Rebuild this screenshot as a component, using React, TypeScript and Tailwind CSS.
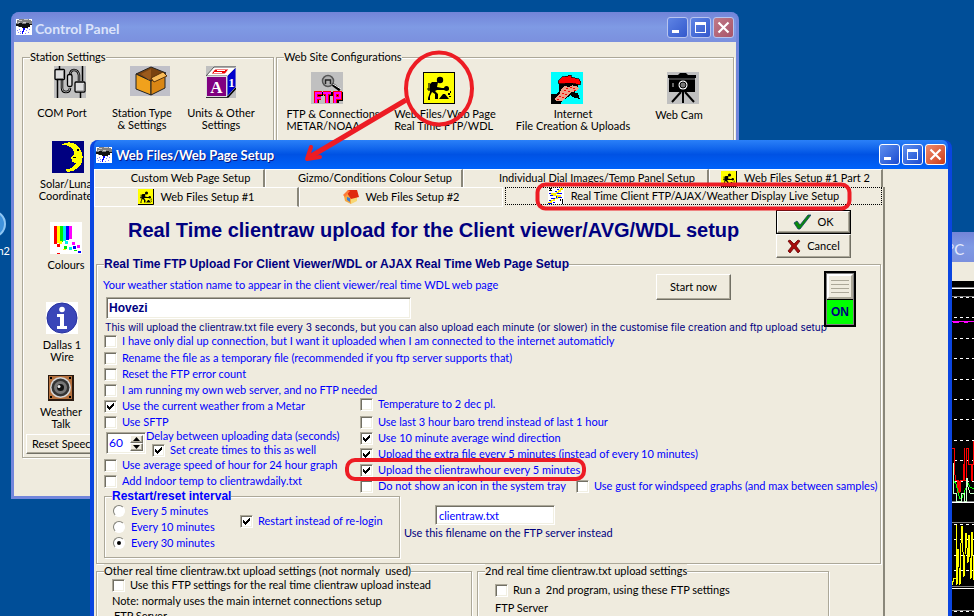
import type { ReactNode } from "react";

/* ---------- icons ---------- */

function StormIcon() {
  return (
    <svg viewBox="0 0 16 16" className="size-4 shrink-0" shapeRendering="crispEdges" aria-hidden="true">
      <rect width="16" height="16" fill="#fff" />
      <path d="M3 0h10v1h2v1h1v4h-2v2h-4v1H6V8H2V6H0V4h1V1h2z" fill="#808080" />
      <path d="M3 1h3v1H3zM8 0h4v1H8zM7 3h3v1H7zM2 3h2v1H2z" fill="#c8c8c8" />
      <path d="M0 5h3V4h3v1h4V4h3v1h3v1h-2v2h-2v1H6V8H3V7H0z" fill="#111" />
      <path d="M7 9h2v2H8v2H7v2H6v-3h1z" fill="#00f" />
      <path d="M3 10h1v1H3zM4 12h1v1H4zM2 13h1v1H2zM1 11h1v1H1zM10 11h1v1h-1zM12 13h1v1h-1zM9 14h1v1H9zM13 10h1v1h-1zM11 9h1v1h-1zM4 14h1v1H4z" fill="#7f7fff" />
    </svg>
  );
}

function DiggerIcon({ small = false }: { small?: boolean }) {
  return (
    <svg viewBox="0 0 32 32" className={small ? "size-4 shrink-0" : "size-8 shrink-0"} aria-hidden="true">
      <rect width="32" height="32" fill={small ? "#ff0" : "#000"} />
      <rect x="1" y="1" width="30" height="30" fill="#ff0" />
      {small && <path d="M31 0v31H0" fill="none" stroke="#000" strokeWidth="2" />}
      <circle cx="17" cy="8" r="3.2" />
      <path d="M9 10h6l-1 5 5 1h3l1 2h-9l-2 1 3 3v5h-3v-5l-3-2-2 4v4H5v-2l2-6V12z" />
      <path d="M6 11v8M4 17h22" fill="none" stroke="#000" strokeWidth="1.2" />
      <circle cx="23.500" cy="16.500" r="2.500" />
      <path d="M16 27l4-5h2l4 5zM25 21h2v2h-2zM27 19h1v2h-1zM26 24h2v1h-2z" />
    </svg>
  );
}

function ComPortIcon() {
  return (
    <svg viewBox="0 0 32 32" className="size-8" aria-hidden="true">
      <rect width="32" height="32" fill="#c0c0c0" />
      <path d="M5.500 0v3M3.500 14v18M28.500 0v15M26.500 26v6" stroke="#000" strokeWidth="1.500" />
      <path d="M8 14v8q0 4 4 4t4-4M16 10q0-6 4-6t5 5v6" fill="none" stroke="#000" strokeWidth="2.500" />
      <path d="M8 14v8q0 4 4 4t4-4M16 10q0-6 4-6t5 5v6" fill="none" stroke="#bbb" strokeWidth=".8" />
      <rect x="1" y="3.500" width="9.500" height="10" rx="1" fill="#ddd" stroke="#000" strokeWidth="1.300" />
      <rect x="21" y="16" width="10" height="10" rx="1" fill="#ddd" stroke="#000" strokeWidth="1.300" />
      <path d="M2.500 12.500h7V5M22.500 25h7.500v-7" fill="none" stroke="#808080" />
      <rect x="13.500" y="8.500" width="4.500" height="12" rx="1.500" fill="#ddd" stroke="#000" strokeWidth="1.300" />
    </svg>
  );
}

function BoxIcon() {
  return (
    <svg viewBox="0 0 40 30" className="h-[30px] w-10" aria-hidden="true">
      <rect width="40" height="30" fill="#c0c0c8" />
      <path d="M6 8L21 1l15 6-15 8z" fill="#7a4310" stroke="#222" />
      <path d="M6 8l15 7v14L6 23z" fill="#f0a11c" stroke="#222" />
      <path d="M21 15l14-6v13l-14 7z" fill="#d98614" stroke="#222" />
      <path d="M21 12l12-6 4 4-13 6z" fill="#f8bb58" stroke="#5a3208" />
      <path d="M11 8l10-5v9l-2 2z" fill="#9b5a1c" />
    </svg>
  );
}

function BlockIcon() {
  return (
    <svg viewBox="0 0 30 32" className="h-8 w-[30px]" aria-hidden="true">
      <rect width="30" height="32" fill="#c0c0c0" />
      <path d="M0 10L8 1h22l-9 9z" fill="#fff" stroke="#555" />
      <path d="M21 10l9-9v20l-9 10z" fill="#00c" stroke="#ccc" />
      <path d="M0 31h22l8-9" fill="none" stroke="#000" strokeWidth="1.500" />
      <rect x="0.500" y="10.500" width="20" height="20" fill="#800080" stroke="#ddd" />
      <path d="M9 3h14l-4 5H5zM11 4.500h8M8 6.500h8" fill="#e00" stroke="#fff" strokeWidth="1" />
      <text x="10.500" y="27" textAnchor="middle" fill="#fff" fontSize="17" fontWeight="700" fontFamily="Liberation Serif, serif">A</text>
      <text x="25.500" y="21" textAnchor="middle" fill="#fff" fontSize="13" fontWeight="700" fontFamily="Liberation Serif, serif">1</text>
    </svg>
  );
}

function MoonIcon() {
  return (
    <svg viewBox="0 0 32 32" className="size-8" shapeRendering="crispEdges" aria-hidden="true">
      <rect width="32" height="32" fill="#000080" />
      <path d="M9 4C16-1 27 1 30 12c3 11-5 19-15 19l-1-3c5 0 8-2 10-6l-4-1v-2h1l-3-2 4-4C22 8 18 3 9 4z" fill="#ff0" />
      <path d="M25 8h2v2h-2zM21 16h3v1h-3z" fill="#000" />
    </svg>
  );
}

function ColoursIcon() {
  const bars = ["#f00", "#ff0", "#0e0", "#0ee", "#00f", "#f0f"];
  return (
    <svg viewBox="0 0 32 32" className="size-8" shapeRendering="crispEdges" aria-hidden="true">
      <rect width="32" height="32" fill="#fff" />
      {bars.map((c, i) => (
        <rect key={c} x={4 + i * 3} y="4" width="3" height={18 - i} fill={c} />
      ))}
      <path d="M7 22h3v3H7zM7 31h3v1H7z" fill="#f00" />
      <path d="M9 19h3v3H9zM13 27h3v1h-3z" fill="#ff0" />
      <path d="M14 24h3v3h-3zM24 28h3v1h-3z" fill="#0e0" />
      <path d="M15 19h3v3h-3zM19 25h3v3h-3z" fill="#0ee" />
      <path d="M23 24h3v3h-3zM28 29h3v2h-3z" fill="#00f" />
      <path d="M22 20h3v3h-3zM27 23h3v3h-3z" fill="#f0f" />
    </svg>
  );
}

function InfoIcon() {
  return (
    <svg viewBox="0 0 32 32" className="size-8" aria-hidden="true">
      <rect width="32" height="32" fill="#fff" />
      <circle cx="16" cy="16" r="15" fill="#3a46b8" stroke="#2630a0" />
      <circle cx="16" cy="7.500" r="2.800" fill="#fff" />
      <path d="M11 12h7v12h3v3H11v-3h3v-9h-3z" fill="#fff" />
    </svg>
  );
}

function SpeakerIcon() {
  return (
    <svg viewBox="0 0 26 26" className="size-[26px]" aria-hidden="true">
      <rect width="26" height="26" fill="#2a1a10" />
      <rect x="1" y="1" width="23" height="23" fill="#b5703c" />
      <circle cx="12.500" cy="12.500" r="10.500" fill="#d5d5d5" />
      <circle cx="12.500" cy="12.500" r="9" fill="#333" />
      <circle cx="12.500" cy="12.500" r="6.500" fill="#777" />
      <circle cx="12.500" cy="12.500" r="3.500" fill="#111" />
      <circle cx="11" cy="11.500" r="1.500" fill="#eee" />
      <path d="M2 2h2v2H2zM21 2h2v2h-2zM2 21h2v2H2zM21 21h2v2h-2z" fill="#000" />
    </svg>
  );
}

function FtpIcon() {
  return (
    <svg viewBox="0 0 32 32" className="size-8" aria-hidden="true">
      <rect width="32" height="32" fill="#c0c0c0" />
      <path d="M21 12l8 6" stroke="#000" strokeWidth="3" />
      <path d="M22 12l8 5" stroke="#fff" strokeWidth="1" />
      <circle cx="17" cy="9" r="5.500" fill="#b0b0b0" stroke="#555" strokeWidth="1.500" />
      <path d="M14.500 12V8h5v4" fill="none" stroke="#222" strokeWidth="1.500" />
      <g fill="none" shapeRendering="crispEdges">
        <path d="M6 31V22h6M6 26h4M17 31V22M13 22h9M26 31V22h5v5h-5" stroke="#000" strokeWidth="4" />
        <path d="M5 31V21h6M5 26h5M16 31V21M12 21h8M24 31V21h5v5h-5" stroke="#f00" strokeWidth="4" />
        <path d="M5 31V21h6M5 26h5M16 31V21M12 21h8M24 31V21h5v5h-5" stroke="#f0f" strokeWidth="2" />
      </g>
    </svg>
  );
}

function InternetIcon() {
  return (
    <svg viewBox="0 0 32 32" className="size-8" shapeRendering="crispEdges" aria-hidden="true">
      <rect width="32" height="32" fill="#0ff" />
      <path d="M8 9h20l-1 6-4 6-12 8-1 3H0V22h6l2-3z" fill="#000" />
      <path d="M13 14l5 1 4-2 4 1 2 3-3 2-4 1-4 3-6 6-6 0-1-3 5-5 1-4z" fill="#eda188" />
      <path d="M15 16h2v1h-2zM19 15h2v1h-2zM22 16h2v1h-2zM13 18h2v1h-2zM17 19h2v1h-2zM11 21h2v1h-2zM14 22h2v1h-2zM8 24h2v1H8zM11 25h2v1h-2zM23 18h2v1h-2zM6 27h2v1H6z" fill="#f00" />
      <path d="M20 20l7 1 2 6-5-1-5-3zM22 13h5v1h-5z" fill="#000" />
      <path d="M7 9l4-4 6-1V3h3v2l8 2 2 3-1 3-9-2-12 1z" fill="#f00" stroke="#000" strokeWidth=".7" />
    </svg>
  );
}

function CameraIcon() {
  return (
    <svg viewBox="0 0 32 32" className="size-8" aria-hidden="true">
      <rect width="32" height="32" fill="#c0c0c0" />
      <path d="M1 3h10l2-2h6l2 2h8v3h-1v14H2V6H1z" fill="#000" />
      <path d="M2 7h26" stroke="#777" />
      <circle cx="16" cy="13" r="4.500" fill="#fff" />
      <circle cx="16" cy="13" r="3" fill="#777" stroke="#000" />
      <rect x="5" y="11" width="2" height="4" fill="#666" />
      <path d="M14 20L5 30M16 20v11M18 20l9 10" stroke="#000" strokeWidth="2" />
    </svg>
  );
}

function HouseIcon() {
  return (
    <svg viewBox="0 0 16 16" className="size-4 shrink-0" aria-hidden="true">
      <path d="M1 7l4-4 4 5-1 7-6-3z" fill="#f4a640" />
      <path d="M8 8l6-1v5l-6 3z" fill="#f7d774" />
      <path d="M5 1l9 0 2 7-8 2-4-6z" fill="#e02a10" />
      <path d="M0 6l5-5 2 1-5 6z" fill="#ff7b39" />
      <path d="M4 8l3 1v4l-3-2z" fill="#3f7fd0" />
    </svg>
  );
}

function LightningIcon() {
  return (
    <svg viewBox="0 0 16 16" className="size-4 shrink-0" shapeRendering="crispEdges" aria-hidden="true">
      <rect width="16" height="16" fill="#fff" />
      <path d="M12 0h3v2h-2v2h-2v2H8V4h2V2h2zM3 5h5v2h5v2h-3v2H7v2H4v2H0v-1h2v-2h3v-2h3V8H5V7H3z" fill="#fe0" />
      <path d="M9 1h2v1H9zM7 3h2v1H7zM1 5h2v1H1zM2 7h3v1H2zM9 5h5v1H9zM3 10h4v1H3zM10 9h4v1h-4zM1 12h2v1H1zM0 15h4v1H0zM5 14h2v1H5zM8 8h1v2H8z" fill="#00f" />
      <path d="M1 0h3v1H1zM2 1h1v1H2zM1 2h3v1H1zM14 11h1v5h-1zM12 11h1v2h-1z" fill="#000" />
    </svg>
  );
}

/* ---------- shared controls ---------- */

const face = "bg-[#efebde]";
const raised =
  "bg-[#efebde] border border-t-white border-l-white border-b-[#716f64] border-r-[#716f64] shadow-[inset_-1px_-1px_0_#aca899]";
const sunken =
  "bg-white border border-t-[#aca899] border-l-[#aca899] border-b-white border-r-white shadow-[inset_1px_1px_0_#716f64,inset_-1px_-1px_0_#f1efe2]";
const boldText = "font-['Liberation_Sans',Arial,sans-serif] text-[12px] font-bold";

function Check({ label, checked = false, color = "text-[#00f]" }: { label: string; checked?: boolean; color?: string }) {
  return (
    <label className={`flex h-4 items-center gap-[5px] whitespace-pre ${color}`}>
      <span className="grid size-[13px] shrink-0 place-items-center">
        <input type="checkbox" defaultChecked={checked} className={`peer col-start-1 row-start-1 size-[13px] appearance-none ${sunken}`} />
        <svg viewBox="0 0 7 7" className="pointer-events-none invisible col-start-1 row-start-1 size-[7px] peer-checked:visible" shapeRendering="crispEdges" aria-hidden="true">
          <path d="M0 2h1v1h1v1h1V3h1V2h1V1h1V0h1v3H6v1H5v1H4v1H3v1H2V6H1V5H0z" fill="#000" />
        </svg>
      </span>
      {label}
    </label>
  );
}

function Radio({ label, checked = false }: { label: string; checked?: boolean }) {
  return (
    <label className="flex h-4 items-center gap-[6px] whitespace-nowrap text-[#00f]">
      <span className="grid size-3 shrink-0 place-items-center">
        <input
          type="radio"
          name="interval"
          defaultChecked={checked}
          className="peer col-start-1 row-start-1 size-3 appearance-none rounded-full border border-t-[#808078] border-l-[#808078] border-b-white border-r-white bg-white"
        />
        <span className="pointer-events-none invisible col-start-1 row-start-1 size-1 rounded-full bg-black peer-checked:visible" />
      </span>
      {label}
    </label>
  );
}

function Group({ title, className, legendClass = "", children }: { title: string; className: string; legendClass?: string; children: ReactNode }) {
  return (
    <fieldset className={`min-w-0 border border-[#aca899] shadow-[1px_1px_0_#fff,inset_1px_1px_0_#fff] ${className}`}>
      <legend className={`ml-[7px] bg-[#efebde] leading-[14px] whitespace-nowrap ${legendClass}`}>{title}</legend>
      {children}
    </fieldset>
  );
}

function CaptionButtons({ active = false }: { active?: boolean }) {
  const blue = active
    ? "border-white bg-linear-to-br from-[#5f8fee] to-[#1c49d0]"
    : "border-[#b8c4ee] bg-linear-to-br from-[#5f84e4] to-[#3458cc]";
  const red = active
    ? "border-white bg-linear-to-br from-[#ef8a6c] to-[#cc3a10]"
    : "border-[#b8c4ee] bg-linear-to-br from-[#c07a88] to-[#a8546a]";
  const base = "grid size-[21px] place-items-center rounded-[3px] border";
  return (
    <div className="ml-auto flex gap-0.5">
      <button aria-label="Minimize" className={`${base} ${blue}`}>
        <svg viewBox="0 0 13 13" className="size-[13px]"><path d="M1 9h7v3H1z" fill="#fff" /></svg>
      </button>
      <button aria-label="Maximize" className={`${base} ${blue}`}>
        <svg viewBox="0 0 13 13" className="size-[13px]" shapeRendering="crispEdges"><path d="M1 1h11v11H1zM2 4v7h9V4z" fill="#fff" fillRule="evenodd" /></svg>
      </button>
      <button aria-label="Close" className={`${base} ${red}`}>
        <svg viewBox="0 0 13 13" className="size-[13px]"><path d="M1.500 1.500l10 10M11.500 1.500l-10 10" stroke="#fff" strokeWidth="2.200" /></svg>
      </button>
    </div>
  );
}

function Launcher({
  icon,
  lines,
  className,
  iconClass = "",
  gap = "gap-[5px]",
  align = "text-center",
}: {
  icon: ReactNode;
  lines: string[];
  className: string;
  iconClass?: string;
  gap?: string;
  align?: string;
}) {
  return (
    <div className={`flex shrink-0 flex-col items-center ${gap} ${className}`}>
      <span className={iconClass}>{icon}</span>
      <span className={`leading-3 whitespace-nowrap ${align}`}>
        {lines.map((l) => (
          <span key={l} className="block">{l}</span>
        ))}
      </span>
    </div>
  );
}

/* ---------- windows ---------- */

function ControlPanel() {
  return (
    <section className="absolute top-3 left-[11px] flex h-[487px] w-[728px] flex-col rounded-t-lg border-[3px] border-t-0 border-[#7286dc] bg-[#7286dc]">
      <header className="flex h-[30px] shrink-0 items-center rounded-t-md bg-linear-to-b from-[#7284d8] via-[#7f9ae4] to-[#7b90de] pr-0.5 pl-0.5">
        <StormIcon />
        <h2 className="ml-[3px] pt-0.5 text-[14px] font-bold text-[#dbe3fa]">Control Panel</h2>
        <CaptionButtons />
      </header>
      <div className={`flex flex-1 items-start gap-[2px] px-2 pt-2 ${face}`}>
        <Group title="Station Settings" className="h-[408px] w-[252px] shrink-0">
          <div className="flex h-[77px] pt-0.5 pl-[15px]">
            <Launcher icon={<ComPortIcon />} lines={["COM Port"]} className="w-12" iconClass="self-end" gap="gap-[9px]" />
            <Launcher icon={<BoxIcon />} lines={["Station Type", "& Settings"]} className="ml-[22px] w-[68px]" iconClass="pl-4" gap="gap-[11px]" />
            <Launcher icon={<BlockIcon />} lines={["Units & Other", "Settings"]} className="ml-[11px] w-[68px]" gap="gap-[9px]" />
          </div>
          <Launcher icon={<MoonIcon />} lines={["Solar/Lunar", "Coordinates"]} className="ml-[3px] h-[81px] w-[84px]" />
          <Launcher icon={<ColoursIcon />} lines={["Colours"]} className="ml-[3px] h-20 w-20" />
          <Launcher icon={<InfoIcon />} lines={["Dallas 1", "Wire"]} className="ml-[3px] h-[73px] w-[72px]" />
          <Launcher icon={<SpeakerIcon />} lines={["Weather", "Talk"]} className="ml-[3px] h-[59px] w-[70px]" />
          <button className={`ml-[3px] h-5 w-[110px] pl-[5px] text-left whitespace-nowrap ${raised}`}>Reset Speech</button>
        </Group>
        <Group title="Web Site Configurations" className="h-[408px] w-[458px] shrink-0">
          <div className="flex pt-2 pl-[10px]">
            <Launcher icon={<FtpIcon />} lines={["FTP & Connections", "METAR/NOAA"]} className="w-[92px]" iconClass="pr-3" gap="gap-1" align="text-left" />
            <Launcher icon={<DiggerIcon />} lines={["Web Files/Web Page", "Real Time FTP/WDL"]} className="ml-[14px] w-[104px]" iconClass="pr-3" gap="gap-1" align="text-left" />
            <Launcher icon={<InternetIcon />} lines={["Internet", "File Creation & Uploads"]} className="ml-[21px] w-[110px]" iconClass="pr-3" gap="gap-1" />
            <Launcher icon={<CameraIcon />} lines={["Web Cam"]} className="ml-[27px] w-12" iconClass="pl-2" />
          </div>
        </Group>
      </div>
    </section>
  );
}

function GraphWindow() {
  const dashes = [297, 317, 338, 358, 379, 399, 419, 440, 460, 481, 524, 539, 555, 570, 611];
  return (
    <section className="absolute top-[232px] right-0 bottom-0 left-[940px] flex flex-col bg-black">
      <header className="flex h-[30px] shrink-0 items-center bg-linear-to-b from-[#7284d8] via-[#7f9ae4] to-[#7b90de] pt-1 pl-2">
        <h2 className="text-[15px] text-[#e4eafc]">°C</h2>
      </header>
      <div className={`h-[19px] shrink-0 ${face}`} />
      <div className="flex-1 overflow-hidden">
        <svg viewBox="940 281 34 335" className="h-[335px] w-[34px]" shapeRendering="crispEdges" fill="none" role="img" aria-label="Weather graph">
          <path d="M940 287.500h34M940 296.500h34M940 501.500h34M940 522.500h34M940 586.500h34M940 610.500h34" stroke="#808080" />
          <path d="M940 288.500h34M940 502.500h34M940 588.500h34" stroke="#fff" />
          {dashes.map((y) => (
            <path key={y} d={`M954 ${y + 0.5}h20`} stroke="#fff" strokeDasharray="3 3" />
          ))}
          <path d="M952 321.500h22M953 322.500h6M964 322.500h4" stroke="#f0f" />
          <path d="M952 448.500h2.500v24l1.500 8h1v10l1 2 1-12 1 12 1-12h2v-16h1v-16h.500v32h2v-32h1.500v16h3.500v16h1v-16h1v-24" stroke="#f00" />
          <path d="M954 481l2 3 2 8 2 7 2-1 1-3 3-7 2-5 2 4 4 2" stroke="#0f0" />
          <path d="M953 463v30h3v8h5v-8h3v8h2v-8l1-15 1 9 2 6h4" stroke="#cfc" />
          <path d="M952 585l2-7h2v-53l1 60 1-36 2 36 1-42 1-17 2 51 2-44 2 30 1-28 2 44 1-47 2 48" stroke="#ff0" />
        </svg>
      </div>
    </section>
  );
}

function Tab({ label, icon, className }: { label: string; icon?: ReactNode; className: string }) {
  return (
    <button role="tab" className={`flex shrink-0 items-center justify-center gap-[7px] whitespace-nowrap ${className}`}>
      <span className="size-4 shrink-0">{icon}</span>
      {label}
    </button>
  );
}

const tabEdge = "border-t border-l border-white border-r-2 border-r-[#8a877a]";

function UploadGroup() {
  return (
    <Group
      title="Real Time FTP Upload For Client Viewer/WDL or AJAX Real Time Web Page Setup"
      className="-mt-px ml-0.5 w-[785px] pb-[5px]"
      legendClass={`text-[#000080] ${boldText}`}
    >
      <div className="flex items-start pl-[6px]">
        <div className="w-[721px] shrink-0">
          <div className="flex items-start justify-between pr-[93px]">
            <div className="pt-[7px]">
              <label htmlFor="station" className="block leading-[14px] whitespace-nowrap text-[#00f]">Your weather station name to appear in the client viewer/real time WDL web page</label>
              <input id="station" defaultValue="Hovezi" className={`mt-[5px] ml-[3px] block h-[22px] w-[305px] px-0.5 text-[#000080] ${boldText} ${sunken}`} />
            </div>
            <button className={`mt-[3px] h-[26px] w-[75px] ${raised}`}>Start now</button>
          </div>
          <p className="mt-0.5 pl-0.5 font-['Inter','Liberation_Sans',sans-serif] text-[10px] leading-3 whitespace-nowrap text-[#000080]">
            This will upload the clientraw.txt file every 3 seconds, but you can also upload each minute (or slower) in the customise file creation and ftp upload setup
          </p>
        </div>
        <button aria-pressed="true" className="flex h-14 w-8 shrink-0 flex-col border-2 border-black bg-[#808080] p-px">
          <span className="flex h-[25px] w-full flex-col justify-center gap-[3px] border-2 border-t-white border-l-white border-r-[#aca899] border-b-[#aca899] bg-[#efebde] px-[2px]">
            <span className="h-px bg-[#aca899]" />
            <span className="h-px bg-[#aca899]" />
            <span className="h-px bg-[#aca899]" />
            <span className="h-px bg-[#aca899]" />
          </span>
          <span className={`grid w-full flex-1 place-items-center border-t border-black bg-[#0f0] text-[#000080] ${boldText}`}>ON</span>
        </button>
      </div>

      <div className="flex pl-[7px]">
        <div className="w-64 shrink-0">
          <Check label="I have only dial up connection, but I want it uploaded when I am connected to the internet automaticly" />
          <div className="mt-px">
            <Check label="Rename the file as a temporary file (recommended if you ftp server supports that)" />
            <Check label="Reset the FTP error count" />
            <Check label="I am running my own web server, and no FTP needed" />
            <Check label="Use the current weather from a Metar" checked />
            <Check label="Use SFTP" />
          </div>
          <div className="flex h-[27px]">
            <div className={`mt-0.5 ml-0.5 flex h-[22px] w-10 shrink-0 p-0.5 ${sunken}`}>
              <input id="delay" defaultValue="60" className="w-[21px] bg-transparent text-[12px] text-[#00f]" />
              <span className="flex w-[15px] flex-col">
                <button aria-label="Increase" className={`grid h-2 place-items-center ${raised}`}>
                  <svg viewBox="0 0 7 4" className="h-1 w-[7px]"><path d="M3.500 0L7 4H0z" /></svg>
                </button>
                <button aria-label="Decrease" className={`grid h-2 place-items-center ${raised}`}>
                  <svg viewBox="0 0 7 4" className="h-1 w-[7px]"><path d="M3.500 4L7 0H0z" /></svg>
                </button>
              </span>
            </div>
            <div>
              <label htmlFor="delay" className="block leading-3 whitespace-nowrap text-[#00f]">Delay between uploading data (seconds)</label>
              <div className="pl-[6px]">
                <Check label="Set create times to this as well" checked />
              </div>
            </div>
          </div>
          <Check label="Use average speed of hour for 24 hour graph" />
          <Check label="Add Indoor temp to clientrawdaily.txt" />
        </div>
        <div className="pt-[63px]">
          <Check label="Temperature to 2 dec pl." />
          <div className="pt-0.5">
            <Check label="Use last 3 hour baro trend instead of last 1 hour" />
            <Check label="Use 10 minute average wind direction" checked />
            <Check label="Upload the extra file every 5 minutes (instead of every 10 minutes)" checked />
            <Check label="Upload the clientrawhour every 5 minutes" checked />
            <div className="flex">
              <div className="w-[216px]">
                <Check label="Do not show an icon in the system tray" />
              </div>
              <Check label="Use gust for windspeed graphs (and max between samples)" />
            </div>
          </div>
        </div>
      </div>

      <div className="-mt-[5px] flex items-start pl-[7px]">
        <Group title="Restart/reset interval" className="w-[296px] shrink-0 pb-[6px]" legendClass={`text-[#00f] ${boldText}`}>
          <div className="flex items-center pl-2">
            <div className="w-[127px]">
              <Radio label="Every 5 minutes" />
              <Radio label="Every 10 minutes" />
              <Radio label="Every 30 minutes" checked />
            </div>
            <div className="pb-3">
              <Check label="Restart instead of re-login" checked />
            </div>
          </div>
        </Group>
        <div className="pt-4 pl-1">
          <input id="filename" defaultValue="clientraw.txt" className={`ml-[31px] block h-5 w-[120px] px-[3px] text-[#00f] ${sunken}`} />
          <label htmlFor="filename" className="block leading-4 whitespace-nowrap text-[#000080]">Use this filename on the FTP server instead</label>
        </div>
      </div>
    </Group>
  );
}

function SetupWindow() {
  return (
    <section className="absolute top-[140px] -bottom-6 left-[90px] flex w-[862px] flex-col rounded-t-lg border-4 border-t-0 border-[#0a45e0] bg-[#0a45e0]">
      <header className="flex h-[29px] shrink-0 items-center rounded-t-md bg-linear-to-b from-[#2a80f8] via-[#0052e4] to-[#0062fa] pr-0.5 pl-0.5">
        <StormIcon />
        <h2 className="ml-1 pt-0.5 text-[13px] font-bold text-white [text-shadow:1px_1px_0_#0a1883]">Web Files/Web Page Setup</h2>
        <CaptionButtons active />
      </header>
      <div className={`flex-1 overflow-hidden ${face}`}>
        <div role="tablist" className="w-[791px]">
          <div className="flex h-[18px]">
            <Tab label="Custom Web Page Setup" className={`w-[171px] ${tabEdge}`} />
            <Tab label="Gizmo/Conditions Colour Setup" className={`w-[198px] ${tabEdge}`} />
            <Tab label="Individual Dial Images/Temp Panel Setup" className={`w-[246px] ${tabEdge}`} />
            <Tab label="Web Files Setup #1 Part 2" icon={<DiggerIcon small />} className={`w-[174px] ${tabEdge}`} />
          </div>
          <div className="flex h-5">
            <Tab label="Web Files Setup #1" icon={<DiggerIcon small />} className={`w-[205px] border-b ${tabEdge}`} />
            <Tab label="Web Files Setup #2" icon={<HouseIcon />} className="w-[204px] border border-white" />
            <div className="flex-1 border-r-2 border-[#8a877a] pr-px pb-0.5 pl-0.5">
              <Tab label="Real Time Client FTP/AJAX/Weather Display Live Setup" icon={<LightningIcon />} className="h-[18px] w-full border border-dotted border-black" />
            </div>
          </div>
        </div>
        <div className="w-[791px] border-r-2 border-[#8a877a]">
          <div className="flex items-start justify-between pt-[3px] pr-[32px] pl-[34px]">
            <h1 className="pt-1 font-['Liberation_Sans',Arial,sans-serif] text-[20px] leading-8 font-bold whitespace-nowrap text-[#000080]">Real Time clientraw upload for the Client viewer/AVG/WDL setup</h1>
            <div className="flex w-[75px] shrink-0 flex-col">
              <div className="border border-black">
                <button className={`flex h-[22px] w-full items-center justify-center gap-[6px] ${raised}`}>
                  <svg viewBox="0 0 18 16" className="h-4 w-[18px]" aria-hidden="true">
                    <path d="M1 9l3-2 3 4L15 1h3L7 15H5z" fill="#0a8a0a" stroke="#123c6a" strokeWidth=".8" />
                  </svg>
                  OK
                </button>
              </div>
              <button className={`flex h-6 items-center justify-center gap-[6px] ${raised}`}>
                <svg viewBox="0 0 14 14" className="size-[14px]" aria-hidden="true">
                  <path d="M1 2l2-1 4 4 4-4 2 1-4 5 4 5-2 2-4-5-4 5-2-2 4-5z" fill="#a80c0c" stroke="#600" strokeWidth=".8" />
                </svg>
                Cancel
              </button>
            </div>
          </div>
          <UploadGroup />
          <div className="flex gap-[5px] pl-0.5">
            <Group title="Other real time clientraw.txt upload settings (not normaly  used)" className="w-[376px] shrink-0 pb-10" legendClass="whitespace-pre">
              <div className="-mt-px pl-[15px]">
                <Check color="text-black" label="Use this FTP settings for the real time clientraw upload instead" />
                <p className="leading-[15px]">Note: normaly uses the main internet connections setup</p>
                <p className="pl-0.5 leading-[15px]">FTP Server</p>
              </div>
            </Group>
            <Group title="2nd real time clientraw.txt upload settings" className="w-[352px] shrink-0 pb-6">
              <div className="pt-1 pl-[17px]">
                <Check color="text-black" label="Run a  2nd program, using these FTP settings" />
                <label htmlFor="ftp2" className="mt-0.5 block leading-4">FTP Server</label>
                <input id="ftp2" className={`block h-5 w-[183px] ${sunken}`} />
              </div>
            </Group>
          </div>
        </div>
      </div>
    </section>
  );
}

export default function App() {
  return (
    <main className="relative h-screen w-full overflow-hidden bg-[#004e98] font-['Lato','Liberation_Sans',Arial,sans-serif] text-[11px] text-black">
      <div className="absolute top-[210px] -left-[22px] flex w-8 flex-col items-end gap-[5px] text-white">
        <span className="mr-1 size-7 rounded-full border-2 border-[#8ec6f4] bg-[#3f92dc]" />
        <span>on2</span>
      </div>
      <ControlPanel />
      <GraphWindow />
      <SetupWindow />
      <svg viewBox="0 0 974 616" className="pointer-events-none absolute top-0 left-0 h-[616px] w-[974px]" fill="none" stroke="#ed1c24" strokeWidth="4" aria-hidden="true">
        <ellipse cx="439" cy="88.500" rx="33" ry="36" />
        <path d="M406 100L308 158" strokeWidth="5" />
        <path d="M311 147l-4 12 13-2" strokeLinejoin="round" strokeLinecap="round" />
        <rect x="537.500" y="184.500" width="312" height="24" rx="8" />
        <rect x="347" y="460" width="237" height="19" rx="8" />
      </svg>
    </main>
  );
}
